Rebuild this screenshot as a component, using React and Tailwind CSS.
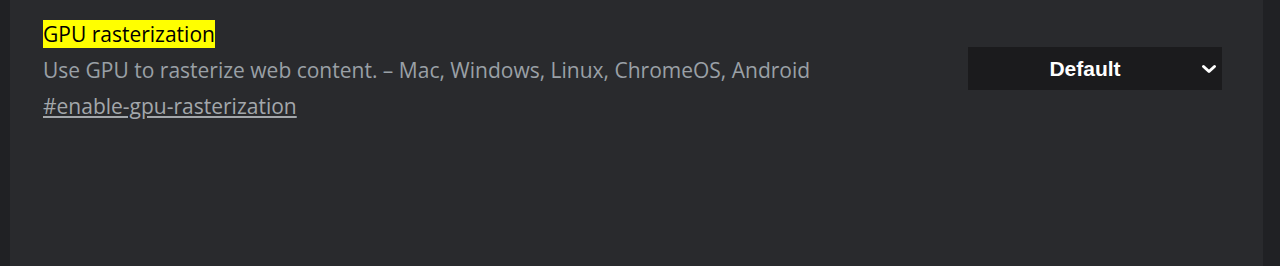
import React from "react";

const App = () => {
  return (
    <div className="flex h-[266px] w-full bg-[#202124]" style={{ fontFamily: '"Open Sans", "Noto Sans", sans-serif' }}>
      <div className="ml-[10px] mr-[17px] flex flex-1 bg-[#292a2d] pl-[33px] pr-[41px] pt-[19px]">
        <div className="flex-1">
          <h3 className="text-[21px] leading-[30px] font-normal">
            <span className="bg-[#ffff00] text-black">GPU rasterization</span>
          </h3>
          <p className="mt-[6px] text-[21px] leading-[30px] text-[#9aa0a6]">
            Use GPU to rasterize web content. – Mac, Windows, Linux, ChromeOS, Android
          </p>
          <a href="#" className="mt-[6px] inline-block text-[21px] leading-[30px] text-[#a3a7ab] underline">
            #enable-gpu-rasterization
          </a>
        </div>
        <div className="pt-[28px]">
          <div className="relative flex h-[43px] w-[254px] items-center justify-center bg-[#1b1b1d] pr-[20px] text-white">
            <span className="text-[21px] font-bold" style={{ fontFamily: '"Liberation Sans", Arial, sans-serif' }}>Default</span>
            <svg className="absolute right-[5px] top-[16px]" width="16" height="12" viewBox="0 0 16 12" fill="none">
              <path d="M2.5 3.5l5.5 5 5.5-5" stroke="white" strokeWidth="3" strokeLinecap="round" strokeLinejoin="round" />
            </svg>
          </div>
        </div>
      </div>
    </div>
  );
};

export default App;
